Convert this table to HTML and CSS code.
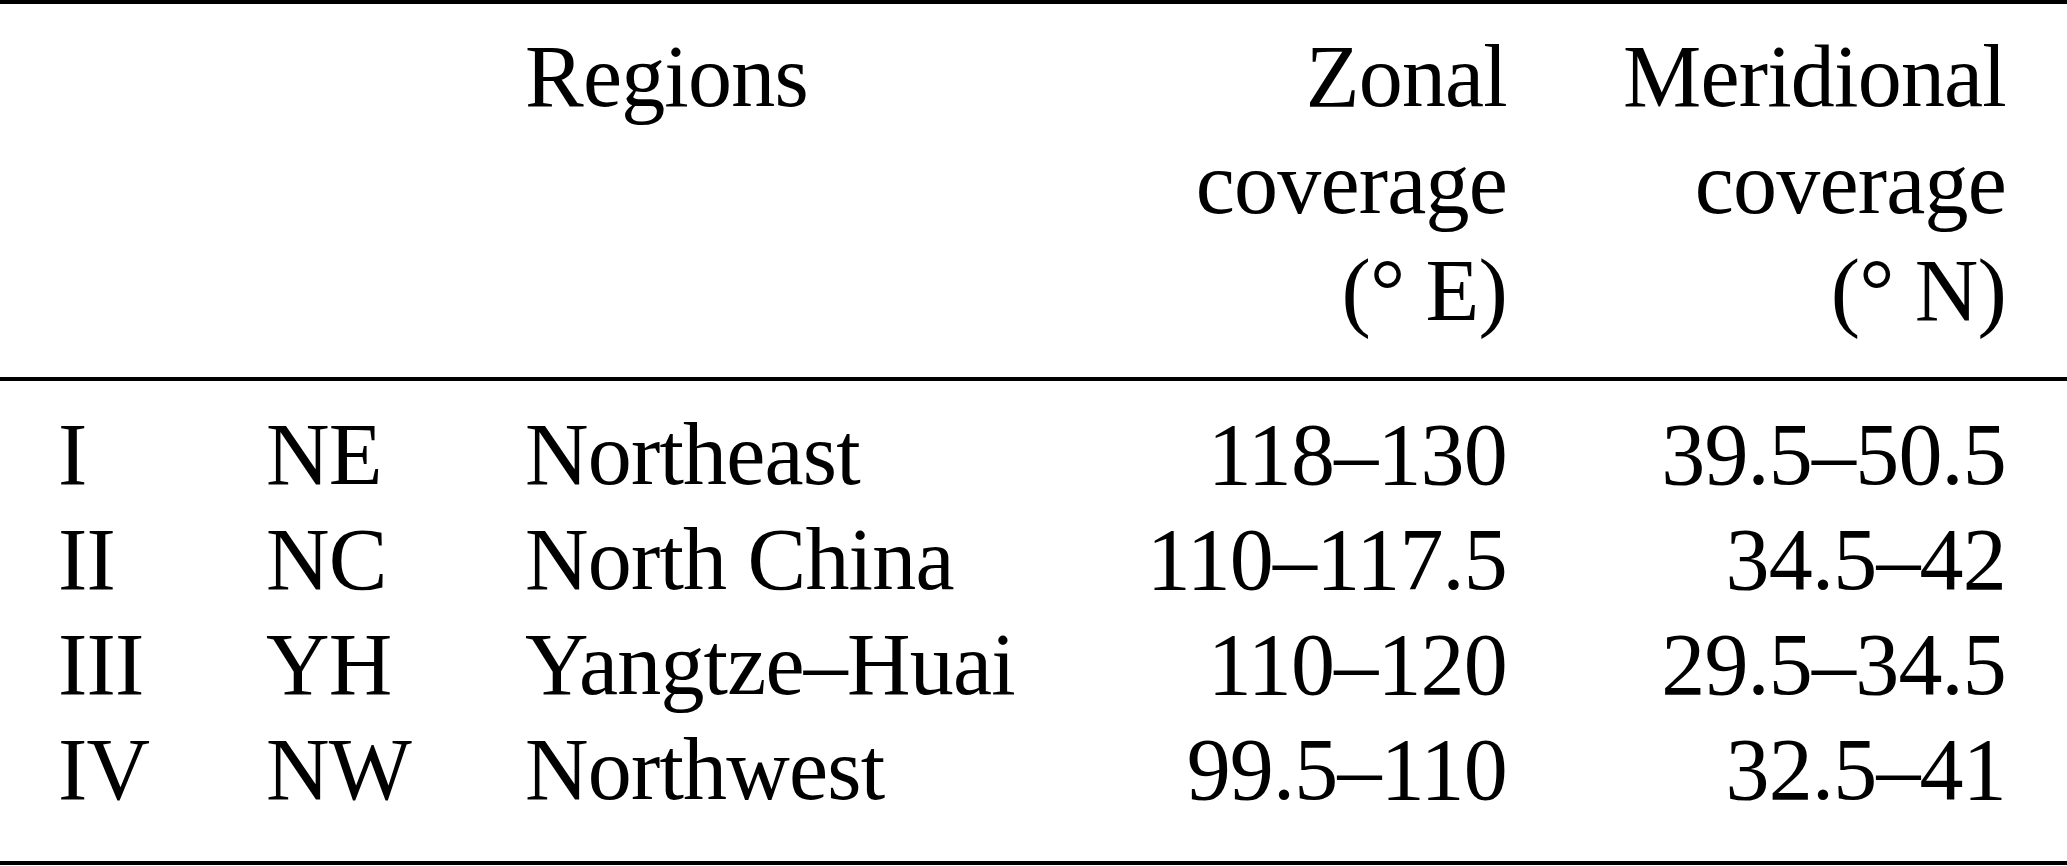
FILE: index.html
```html
<!DOCTYPE html>
<html lang="en">
<head>
    <meta charset="UTF-8">
    <meta name="viewport" content="width=device-width, initial-scale=1.0">
    <title>Regions</title>
    <link rel="stylesheet" href="styles.css">
</head>
<body>
    <table class="regions">
        <colgroup>
            <col class="c-num">
            <col class="c-abbr">
            <col class="c-name">
            <col class="c-zonal">
            <col class="c-merid">
        </colgroup>
        <thead>
            <tr>
                <th></th>
                <th></th>
                <th class="left">Regions</th>
                <th class="right">Zonal<br>coverage<br>(° E)</th>
                <th class="right">Meridional<br>coverage<br>(° N)</th>
            </tr>
        </thead>
        <tbody>
            <tr class="first">
                <td>I</td>
                <td>NE</td>
                <td>Northeast</td>
                <td class="right">118–130</td>
                <td class="right">39.5–50.5</td>
            </tr>
            <tr>
                <td>II</td>
                <td>NC</td>
                <td>North China</td>
                <td class="right">110–117.5</td>
                <td class="right">34.5–42</td>
            </tr>
            <tr>
                <td>III</td>
                <td>YH</td>
                <td>Yangtze–Huai</td>
                <td class="right">110–120</td>
                <td class="right">29.5–34.5</td>
            </tr>
            <tr class="last">
                <td>IV</td>
                <td>NW</td>
                <td>Northwest</td>
                <td class="right">99.5–110</td>
                <td class="right">32.5–41</td>
            </tr>
        </tbody>
    </table>
</body>
</html>
```

FILE: styles.css
```css
body {
    margin: 0;
    background: #fff;
}
.regions {
    width: 2067px;
    table-layout: fixed;
    border-collapse: collapse;
    border-top: 4px solid #000;
    border-bottom: 4px solid #000;
    font-family: "Liberation Serif", "Times New Roman", serif;
    font-size: 88px;
    letter-spacing: -0.8px;
    color: #000;
}
.c-num { width: 266px; }
.c-abbr { width: 259px; }
.c-name { width: 503px; }
.c-zonal { width: 479px; }
.c-merid { width: 560px; }
.regions thead {
    border-bottom: 4px solid #000;
}
.regions th {
    font-weight: normal;
    line-height: 107px;
    padding: 19px 0 33px;
    vertical-align: top;
    white-space: nowrap;
}
.regions td {
    line-height: 105px;
    padding: 0;
    text-align: left;
    white-space: nowrap;
}
.regions td:first-child {
    padding-left: 58px;
}
.regions td:last-child,
.regions th:last-child {
    padding-right: 61px;
}
.regions tr.first td {
    padding-top: 21px;
}
.regions tr.last td {
    padding-bottom: 39px;
}
.left {
    text-align: left;
}
.right {
    text-align: right !important;
}
```
